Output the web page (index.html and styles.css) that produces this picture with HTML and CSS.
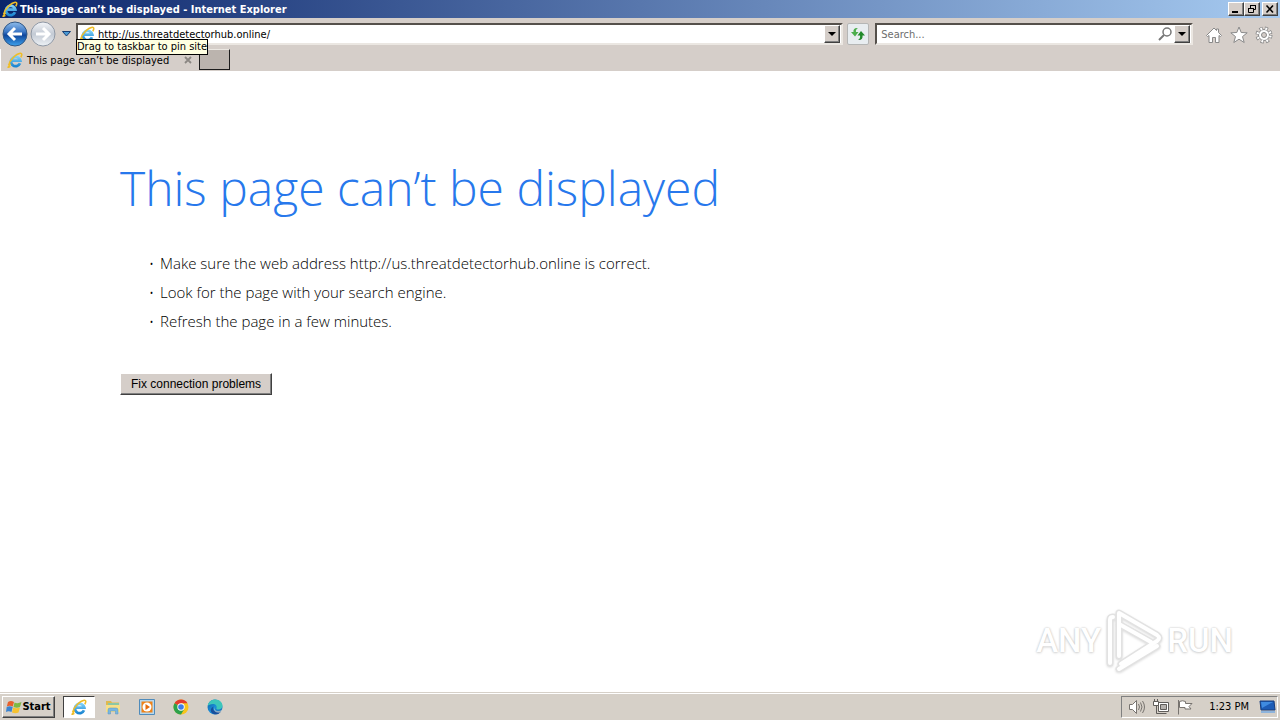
FILE: index.html
```html
<!DOCTYPE html>
<html lang="en">

<head>
	<meta charset="UTF-8">
	<meta name="viewport" content="width=device-width, initial-scale=1.0">
	<title>This page can’t be displayed</title>
	<link rel="stylesheet" href="styles.css">
</head>

<body>
	<!-- shared icons -->
	<svg class="defs" aria-hidden="true">
		<defs>
			<linearGradient id="blue" x1="0" y1="0" x2="0" y2="1">
				<stop offset="0" stop-color="#8fbcea" />
				<stop offset="0.4" stop-color="#3d78c6" />
				<stop offset="0.55" stop-color="#0f469c" />
				<stop offset="1" stop-color="#3fa4ee" />
			</linearGradient>
			<linearGradient id="pale" x1="0" y1="0" x2="0" y2="1">
				<stop offset="0" stop-color="#f4f6f9" />
				<stop offset="0.5" stop-color="#c3cad4" />
				<stop offset="1" stop-color="#eef2f6" />
			</linearGradient>
			<linearGradient id="edge" x1="0" y1="0" x2="1" y2="1">
				<stop offset="0" stop-color="#0c59a4" />
				<stop offset="0.5" stop-color="#1b8fd8" />
				<stop offset="1" stop-color="#1464b4" />
			</linearGradient>
			<linearGradient id="letter" x1="0" y1="0" x2="0" y2="1">
				<stop offset="0" stop-color="#7fd0f7" />
				<stop offset="1" stop-color="#1b86d2" />
			</linearGradient>
		</defs>
		<symbol id="ie" viewBox="0 0 16 16">
			<path d="M13 11.300A4.700 4.700 0 1 1 13.300 8.600H5" fill="none" stroke="url(#letter)" stroke-width="2.800" />
			<path d="M3.600 11.800C.2 16 .5 16 3.400 14.400M1.700 13.200C2.500 8 9 1.800 13.300 1.300 15.300 1.100 15 3.300 13.800 5.200" fill="none" stroke="#efbd28" stroke-width="1.600" />
		</symbol>
	</svg>

	<header class="titlebar">
		<svg class="icon"><use href="#ie" /></svg>
		<span class="titlebar-text">This page can’t be displayed - Internet Explorer</span>
		<div class="window-buttons">
			<button aria-label="Minimize"><svg viewBox="0 0 12 10"><path d="M2 8h6" stroke="#000" stroke-width="2" /></svg></button>
			<button aria-label="Restore"><svg viewBox="0 0 12 10"><path d="M4.500 4V1.500h5v4H8M4 1.500h6M2.500 4.500h5v4h-5zM2 4.500h6" fill="none" stroke="#000" /></svg></button>
			<button class="close" aria-label="Close"><svg viewBox="0 0 12 10"><path d="M2.500 1.500l6.500 7M9 1.500l-6.500 7" stroke="#000" stroke-width="1.600" /></svg></button>
		</div>
	</header>

	<nav class="toolbar">
		<button class="round" aria-label="Back">
			<svg viewBox="0 0 26 26"><circle cx="13" cy="13" r="12" fill="url(#blue)" stroke="#315784" /><path d="M20 13H8M13 7l-6 6 6 6" fill="none" stroke="#fff" stroke-width="3" /></svg>
		</button>
		<button class="round" aria-label="Forward">
			<svg viewBox="0 0 26 26"><circle cx="13" cy="13" r="12" fill="url(#pale)" stroke="#8f98a5" /><path d="M6 13h12M13 7l6 6-6 6" fill="none" stroke="#fff" stroke-width="3" /></svg>
		</button>
		<button class="recent" aria-label="Recent pages">
			<svg viewBox="0 0 9 6"><path d="M.5.5h8L4.500 5z" fill="#4a9ad4" stroke="#153e75" /></svg>
		</button>
		<div class="field address">
			<svg class="icon"><use href="#ie" /></svg>
			<input type="text" aria-label="Address" value="http://us.threatdetectorhub.online/">
			<button class="drop" aria-label="Show address list"><svg viewBox="0 0 8 4"><path d="M0 0h8L4 4z" /></svg></button>
			<div class="tooltip" role="tooltip">Drag to taskbar to pin site</div>
		</div>
		<button class="refresh" aria-label="Refresh">
			<svg viewBox="0 0 16 16"><path d="M8 2C4.500 1.500 3 3.500 3.500 6H1l4 4.500L8.500 6H6C5.500 4 6.500 3 8 2z" fill="#4cae4c" /><path d="M8 14c3.500.5 5-1.500 4.500-4.500H15L11 5 7.500 9.500H10C10.500 12 9.500 13 8 14z" fill="#218a2a" /></svg>
		</button>
		<div class="field search">
			<input type="text" aria-label="Search" placeholder="Search...">
			<svg class="icon" viewBox="0 0 16 16"><circle cx="10" cy="6" r="4" fill="none" stroke="#777" stroke-width="1.500" /><path d="M7 9l-5 5" stroke="#777" stroke-width="2" /></svg>
			<button class="drop" aria-label="Search options"><svg viewBox="0 0 8 4"><path d="M0 0h8L4 4z" /></svg></button>
		</div>
		<div class="tools">
			<button aria-label="Home"><svg viewBox="0 0 18 18"><path d="M1.500 9.500L9 2l2.500 2.500V3h2v3.500l3 3-1 1L14 9.500v7h-3.500v-5h-3v5H4v-7l-1.500 1z" fill="#fff" stroke="#898989" /></svg></button>
			<button aria-label="Favorites"><svg viewBox="0 0 18 18"><path d="M9 1l2.200 5.500 6 .3-4.700 3.800 1.700 5.900L9 13.200l-5.200 3.300 1.700-5.900L.8 6.800l6-.3z" fill="#fff" stroke="#898989" /></svg></button>
			<button aria-label="Tools"><svg viewBox="0 0 18 18"><circle cx="9" cy="9" r="6.500" fill="none" stroke="#898989" stroke-width="4" stroke-dasharray="3 2.105" /><circle cx="9" cy="9" r="5.500" fill="#fff" stroke="#898989" /><circle cx="9" cy="9" r="6.500" fill="none" stroke="#fff" stroke-width="2.400" stroke-dasharray="1.800 3.305" stroke-dashoffset="-.6" /><circle cx="9" cy="9" r="2.500" fill="#d4cdc8" stroke="#898989" /></svg></button>
		</div>
	</nav>

	<div class="tabs">
		<div class="tab">
			<svg class="icon"><use href="#ie" /></svg>
			<span>This page can’t be displayed</span>
			<button aria-label="Close tab"><svg viewBox="0 0 8 8"><path d="M1 1l6 6M7 1L1 7" stroke="#8b8783" stroke-width="1.800" /></svg></button>
		</div>
		<button class="new-tab" aria-label="New tab"></button>
	</div>

	<main>
		<h1>This page can’t be displayed</h1>
		<ul>
			<li>Make sure the web address http://us.threatdetectorhub.online is correct.</li>
			<li>Look for the page with your search engine.</li>
			<li>Refresh the page in a few minutes.</li>
		</ul>
		<button class="fix">Fix connection problems</button>
		<div class="watermark">
			<span>ANY</span>
			<svg viewBox="0 0 58 64">
				<g fill="none" stroke-linejoin="round" stroke-linecap="round">
					<path d="M5 55V12q0-3 3-3M14 48V5l38 22q4 3 0 6L16 56M14 16l32 18M14 61l38-23" stroke="#e2e2e2" stroke-width="7" />
					<path d="M5 55V12q0-3 3-3M14 48V5l38 22q4 3 0 6L16 56M14 16l32 18M14 61l38-23" stroke="#fff" stroke-width="4" />
				</g>
			</svg>
			<span>RUN</span>
		</div>
	</main>

	<footer class="taskbar">
		<button class="start">
			<svg viewBox="0 0 16 16"><path d="M2 3q3-2 6 0L6.800 7.500q-3-1.500-6 0z" fill="#e7602c" /><path d="M8.500 3.500q3 1.500 7-.5L14 8q-3 1.500-6.500 0z" fill="#7db943" /><path d="M.7 8q3-1.500 6 0L5.500 13q-3-1.500-5.500 0z" fill="#3a83d0" /><path d="M7.200 8.500q3 1.500 6.800 0l-1.500 5q-3 1.500-6.500 0z" fill="#f6c22f" /></svg>
			Start
		</button>
		<div class="tasks">
			<button class="active" aria-label="Internet Explorer"><svg><use href="#ie" /></svg></button>
			<button aria-label="Explorer"><svg viewBox="0 0 16 16"><path d="M1 2h5l1 1.500h7v9H1z" fill="#dfb94f" /><path d="M3 4h11v3H3z" fill="#8bc7a5" /><path d="M1 6h14v7H1z" fill="#f7df88" /><path d="M3 15v-4q0-2 2-2h6q2 0 2 2v4h-2.500v-3h-5v3z" fill="#78b6e1" stroke="#5895bd" stroke-width=".5" /></svg></button>
			<button aria-label="Media Player"><svg viewBox="0 0 16 16"><path d="M.5.5h15v15H.5z" fill="#b7d8ee" stroke="#4f8bbb" /><path d="M2.500 2.500h11v11h-11z" fill="#ef8218" /><circle cx="8" cy="8" r="4.500" fill="#fff" /><path d="M6.500 5l4.500 3-4.500 3z" fill="#e66b0c" /></svg></button>
			<button aria-label="Chrome"><svg viewBox="0 0 16 16"><circle cx="8" cy="8" r="7.500" fill="#f8c51c" /><path d="M8 8L1.500 4.200A7.500 7.500 0 0 1 14.500 4.200H8z" fill="#e33b2e" /><path d="M8 8L1.500 4.200A7.500 7.500 0 0 0 8 15.500l3.300-5.600z" fill="#2da14b" /><circle cx="8" cy="8" r="3.700" fill="#fff" /><circle cx="8" cy="8" r="2.800" fill="#3e7de8" /></svg></button>
			<button aria-label="Edge"><svg viewBox="0 0 16 16"><circle cx="8" cy="8" r="7.500" fill="url(#edge)" /><path d="M.6 7C1.500 2.500 5 .5 8 .5c4.500 0 7.500 3 7.500 6.200 0 2.300-1.800 3.800-4 3.800-1.800 0-2.500-.7-2-1.500C10.200 7.500 9 5 6 5 3.500 5 1.500 6 .6 7z" fill="#3cc6bb" /><path d="M6.500 7.500c-1.500 4 2 6.500 7.500 5-2.500 3.500-6.500 3.500-9 1.500-2-2-1.500-5 1.500-6.500z" fill="#174f9d" /><path d="M8 8q-1 3 2 4 3 .5 5-1.500v2l-1 1q-6 1-7-3z" fill="#d4d0c8" opacity=".6" /></svg></button>
		</div>
		<div class="tray">
			<svg viewBox="0 0 18 16" fill="none" stroke="#77736f"><path d="M1.500 5.500h3l4-4v13l-4-4h-3z" fill="#fff" /><path d="M10.500 5q2 3 0 6M12.500 3.500q3 4.500 0 9M14.500 2q4 6 0 12" /></svg>
			<svg viewBox="0 0 18 16" fill="none" stroke="#5f5c59"><path d="M6.500 3.500h10v9h-10z" fill="#fff" /><path d="M8.500 5.500h6v5h-6z" fill="#b5b1ad" /><path d="M1.500 2.500h5v4h-5z" fill="#fff" /><path d="M2.500 0v2M5.500 0v2M4.500 7v7.500h10" /></svg>
			<svg viewBox="0 0 18 16" fill="#fff" stroke="#77736f"><path d="M2.500 1v14.500M3.500 2.500q3-1.500 6 0v2h6.500l-3 3 2 2.500H9V8.500H3.500z" /></svg>
			<time>1:23 PM</time>
			<svg class="desktop" viewBox="0 0 18 16"><path d="M1 2h14l1 9H2z" fill="#1d5cb6" stroke="#163c7c" /><path d="M2 3h12L3 9z" fill="#3f8be0" /><path d="M2 13h14" stroke="#8eb4dc" stroke-width="2" /></svg>
		</div>
	</footer>
</body>

</html>
```
FILE: styles.css
```css
:root {
	--face: #d5cec9;
	--dark: #404040;
	--shadow: #808080;
	--ui-font: "DejaVu Sans Condensed", "DejaVu Sans", sans-serif;
}

*,
*:before,
*:after {
	box-sizing: border-box;
}

body {
	display: flex;
	flex-direction: column;
	min-height: 100vh;
	margin: 0;
	background: #fff;
	color: #000;
	font-family: var(--ui-font);
	font-size: 11px;
}

button,
input {
	margin: 0;
	padding: 0;
	font: inherit;
	color: inherit;
}

button {
	display: flex;
	align-items: center;
	justify-content: center;
	flex: none;
	border: none;
	background: none;
}

svg {
	display: block;
	flex: none;
}

.defs {
	position: absolute;
	width: 0;
	height: 0;
}

.icon {
	width: 16px;
	height: 16px;
}

/* title bar */
.titlebar {
	display: flex;
	align-items: center;
	gap: 2px;
	height: 18px;
	padding: 0 2px;
	background: linear-gradient(to right, #0a246a, #a6caf0);
	color: #fff;
	font-weight: bold;
}

.titlebar-text {
	flex: 1;
	white-space: nowrap;
}

.window-buttons {
	display: flex;
}

.window-buttons button,
.drop {
	width: 16px;
	height: 14px;
	background: var(--face);
	border: 1px solid;
	border-color: #fff var(--dark) var(--dark) #fff;
	box-shadow: inset -1px -1px var(--shadow);
}

.window-buttons svg {
	width: 12px;
	height: 10px;
}

.window-buttons .close {
	margin-left: 2px;
}

/* navigation */
.toolbar {
	display: flex;
	align-items: center;
	height: 31px;
	padding: 0 7px 0 2px;
	background: var(--face);
}

.round svg {
	width: 26px;
	height: 26px;
}

.round + .round {
	margin-left: 2px;
}

.recent {
	width: 20px;
}

.recent svg {
	width: 9px;
	height: 6px;
}

.field {
	position: relative;
	display: flex;
	align-items: center;
	height: 22px;
	padding: 0 1px;
	background: #fff;
	border: 2px solid;
	border-color: #55504b #ebe7e2 #ebe7e2 #55504b;
}

.address {
	flex: 1;
}

.search {
	width: 25%;
}

.field input {
	flex: 1;
	min-width: 0;
	height: 18px;
	padding: 2px 3px 0;
	border: none;
	outline: none;
	background: none;
}

.field input::placeholder {
	color: #6d6d6d;
	opacity: 1;
}

.drop {
	height: 18px;
	margin-left: 1px;
}

.drop svg {
	width: 8px;
	height: 4px;
}

.tooltip {
	position: absolute;
	top: 14px;
	left: -2px;
	border: 1px solid #000;
	background: #ffffe1;
	line-height: 14px;
	white-space: nowrap;
}

.refresh {
	width: 22px;
	height: 22px;
	margin: 0 6px 0 4px;
	background: #e8edf0;
	border: 1px solid #b5b6b5;
	border-radius: 2px;
}

.refresh svg {
	width: 16px;
	height: 16px;
}

.tools {
	display: flex;
	gap: 7px;
	margin: 3px 0 0 12px;
}

.tools svg {
	width: 18px;
	height: 18px;
}

/* tabs */
.tabs {
	display: flex;
	height: 22px;
	background: var(--face);
}

.tab {
	display: flex;
	align-items: center;
	gap: 4px;
	width: 199px;
	padding: 0 7px 0 6px;
	border-left: 1px solid #fff;
}

.tab span {
	flex: 1;
	white-space: nowrap;
}

.tab button svg {
	width: 8px;
	height: 8px;
}

.new-tab {
	width: 31px;
	height: 21px;
	background: #bbb4ae;
	border: 1px solid;
	border-color: #ebe7e2 #1c1c1c #1c1c1c;
}

/* error page */
main {
	position: relative;
	flex: 1;
	padding: 81px 120px 0;
}

h1 {
	margin: 0;
	color: #2778ec;
	font: 300 48px/72px "Open Sans", sans-serif;
}

ul {
	margin: 25px 0 37px;
	padding-left: 40px;
	font: 300 15px/29px "Open Sans", sans-serif;
}

li::marker {
	content: "•  ";
	font-size: 12px;
}

.fix {
	height: 22px;
	padding: 0 10px;
	background: var(--face);
	border: 1px solid;
	border-color: #fff var(--dark) var(--dark) #fff;
	box-shadow: inset -1px -1px var(--shadow);
	font: 12px "Liberation Sans", sans-serif;
}

.watermark {
	position: absolute;
	right: 47px;
	bottom: 20px;
	display: flex;
	align-items: center;
	gap: 4px;
	color: #fff;
	font: 500 33px Roboto, sans-serif;
	text-shadow: 0 0 2px #bbb, 0 1px 3px #ddd;
}

.watermark svg {
	width: 58px;
	height: 64px;
	filter: drop-shadow(0 1px 1px #ddd);
}

/* taskbar */
.taskbar {
	display: flex;
	align-items: center;
	height: 28px;
	padding: 0 2px;
	background: #d6d0c8;
	border-top: 1px solid #d6d0c8;
	box-shadow: inset 0 1px #fff;
}

.start {
	width: 53px;
	height: 22px;
	border: 1px solid;
	border-color: #fff var(--dark) var(--dark) #fff;
	box-shadow: inset -1px -1px var(--shadow);
	font-weight: bold;
}

.taskbar svg {
	width: 16px;
	height: 16px;
}

.tasks {
	display: flex;
	flex: 1;
	gap: 2px;
	margin-left: 8px;
}

.tasks button {
	width: 32px;
	height: 22px;
}

.tasks .active {
	background: #fff;
	border: 1px solid;
	border-color: var(--dark) #fff #fff var(--dark);
}

.tray {
	display: flex;
	align-items: center;
	gap: 6px;
	height: 22px;
	padding: 0 0 0 6px;
	border: 1px solid;
	border-color: var(--shadow) #fff #fff var(--shadow);
}

.tray .icon,
.tray svg {
	width: 18px;
}

.tray time {
	margin: 0 4px 0 9px;
}
```
